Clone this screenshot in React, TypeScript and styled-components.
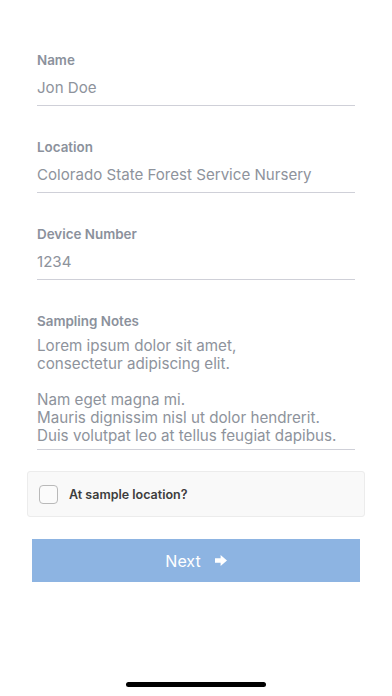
import React from "react";
import styled, { createGlobalStyle } from "styled-components";

const GlobalStyle = createGlobalStyle`
  html, body {
    margin: 0;
    padding: 0;
    background: #ffffff;
  }
  body {
    font-family: Inter, "Noto Sans", "Liberation Sans", sans-serif;
    -webkit-font-smoothing: antialiased;
  }
`;

const Screen = styled.div`
  width: 392px;
  height: 696px;
  position: relative;
  background: #ffffff;
  overflow: hidden;
  display: flex;
  flex-direction: column;
  padding-top: 52px;
  box-sizing: border-box;
`;

const Fields = styled.div`
  display: flex;
  flex-direction: column;
  gap: 33px;
  padding: 0 37px;
`;

const Field = styled.div<{ $tight?: boolean }>`
  display: flex;
  flex-direction: column;
  gap: ${(p) => (p.$tight ? "8px" : "10px")};
  padding-bottom: ${(p) => (p.$tight ? "4px" : "7px")};
  border-bottom: 1px solid #cfd0d8;
`;

const Label = styled.div`
  font-size: 13.4px;
  line-height: 16px;
  font-weight: 600;
  color: #8b919c;
`;

const Value = styled.div`
  font-size: 15.1px;
  line-height: 20px;
  color: #8e939c;
`;

const Notes = styled.div`
  font-size: 15.2px;
  line-height: 18px;
  color: #8e939c;
  white-space: pre-line;
`;

const CheckCard = styled.label`
  margin: 21px 27px 0 27px;
  height: 46px;
  box-sizing: border-box;
  display: flex;
  align-items: center;
  gap: 11px;
  padding: 0 11px;
  background: #f9f9f9;
  border: 1px solid #ececec;
  border-radius: 3px;
`;

const Box = styled.span`
  width: 19px;
  height: 19px;
  box-sizing: border-box;
  border: 1.5px solid #b9b9b9;
  border-radius: 4px;
  background: #fbfbfb;
`;

const CheckText = styled.span`
  font-size: 12.5px;
  font-weight: 600;
  color: #3d3d3d;
`;

const NextButton = styled.button`
  margin: 22px 32px 0 32px;
  height: 43px;
  border: none;
  background: #8db4e2;
  color: #ffffff;
  font-family: inherit;
  font-size: 16px;
  display: flex;
  align-items: center;
  justify-content: center;
  gap: 14px;
  padding: 0;
`;

const HomeIndicator = styled.div`
  position: absolute;
  left: 126px;
  bottom: 9px;
  width: 140px;
  height: 5px;
  border-radius: 3px;
  background: #000000;
`;

const ArrowIcon = () => (
  <svg width="12" height="11" viewBox="0 0 12 11">
    <path d="M0 3.3H5.6V0L12 5.5L5.6 11V7.7H0Z" fill="#ffffff" />
  </svg>
);

export default function App() {
  return (
    <Screen>
      <GlobalStyle />
      <Fields>
        <Field>
          <Label>Name</Label>
          <Value>Jon Doe</Value>
        </Field>
        <Field>
          <Label>Location</Label>
          <Value>Colorado State Forest Service Nursery</Value>
        </Field>
        <Field>
          <Label>Device Number</Label>
          <Value>1234</Value>
        </Field>
        <Field $tight>
          <Label>Sampling Notes</Label>
          <Notes>
            {"Lorem ipsum dolor sit amet,\nconsectetur adipiscing elit.\n\u00a0\nNam eget magna mi.\nMauris dignissim nisl ut dolor hendrerit.\nDuis volutpat leo at tellus feugiat dapibus."}
          </Notes>
        </Field>
      </Fields>
      <CheckCard>
        <Box />
        <CheckText>At sample location?</CheckText>
      </CheckCard>
      <NextButton>
        Next
        <ArrowIcon />
      </NextButton>
      <HomeIndicator />
    </Screen>
  );
}
